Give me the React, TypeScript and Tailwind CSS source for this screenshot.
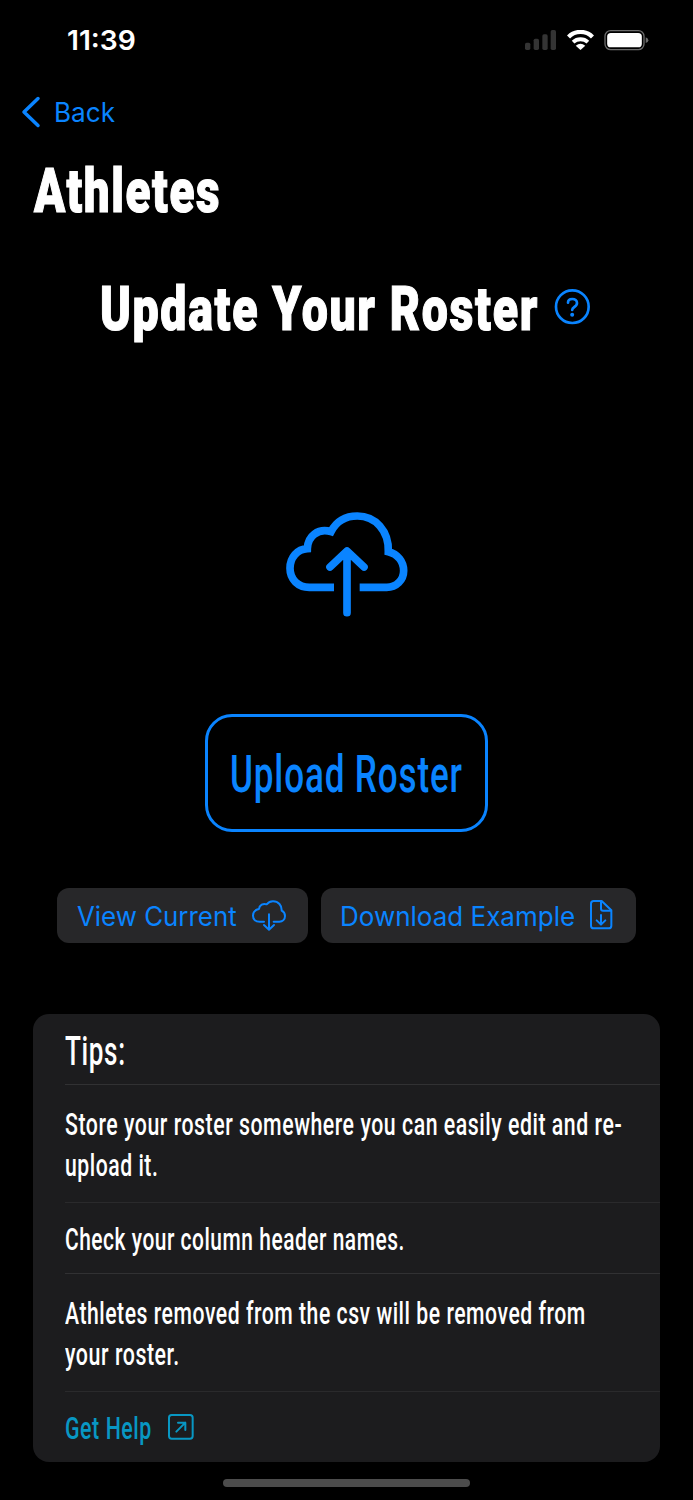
import React, { useLayoutEffect, useRef, useState } from "react";

type FitTextProps = {
  children: string;
  width: number;
  className: string;
};

// Condenses a single line of text so it fills the given width
const FitText = ({ children, width, className }: FitTextProps) => {
  const ref = useRef<HTMLSpanElement>(null);
  const [scale, setScale] = useState(1);

  useLayoutEffect(() => {
    if (ref.current) setScale(width / ref.current.offsetWidth);
  }, [width, children]);

  return (
    <span className="block" style={{ width }}>
      <span
        ref={ref}
        className={`block w-max origin-left whitespace-nowrap ${className}`}
        style={{ transform: `scaleX(${scale})` }}
      >
        {children}
      </span>
    </span>
  );
};

const inter = "font-['Inter',sans-serif] text-[27px] leading-8";
const titleText =
  "font-['Roboto',sans-serif] text-[62px] leading-[80px] font-black tracking-[0.035em] [-webkit-text-stroke:1.2px_#fff]";
const tipText = "font-['Roboto',sans-serif] text-[30.5px] leading-[41px] font-medium tracking-[0.025em]";

const StatusBar = () => (
  <div className="flex h-20 shrink-0 items-center justify-between pr-[44px] pl-[67px]">
    <FitText width={69} className={`${inter} pt-px font-semibold`}>
      11:39
    </FitText>
    <div className="flex items-center">
      {/* signal */}
      <svg className="mr-[11px] h-5 w-[31px]" viewBox="0 0 93 60" fill="#343434">
        <rect x="0" y="38" width="16" height="22" rx="5" />
        <rect x="26" y="26" width="16" height="34" rx="5" />
        <rect x="52" y="13" width="16" height="47" rx="5" />
        <rect x="77" y="0" width="16" height="60" rx="5" />
      </svg>
      {/* wifi */}
      <svg className="mr-[10px] h-5 w-[27px]" viewBox="0 0 81 61" fill="none" stroke="#fff" strokeWidth="13">
        <path d="M4 21A51.5 51.5 0 0 1 77 21" />
        <path d="M18 37A33 33 0 0 1 63 37" strokeWidth="12" />
        <path d="M26 48Q40.5 36 55 48L40.5 61Z" fill="#fff" stroke="none" />
      </svg>
      {/* battery */}
      <svg className="h-[21px] w-[45px]" viewBox="0 0 135 63" fill="none">
        <rect x="3" y="2" width="117" height="57" rx="17" stroke="#6b6b6b" strokeWidth="4" />
        <rect x="9.500" y="9" width="104" height="43" rx="11" fill="#fff" />
        <path d="M125 22Q133 25 133 30.500T125 39Z" fill="#6b6b6b" />
      </svg>
    </div>
  </div>
);

const HelpIcon = () => (
  <svg className="-mt-[5px] ml-[17px] h-9 w-9" viewBox="0 0 108 108" fill="none" stroke="#0a84ff">
    <circle cx="55" cy="53" r="49" strokeWidth="8" />
    <path
      d="M42 41C42 34 47 30 55 30C63 30 69 35 69 42C69 48 66 51 61 54C56 57 54.500 59 54.500 63"
      strokeWidth="8"
      strokeLinecap="round"
    />
    <circle cx="54.500" cy="77" r="6" fill="#0a84ff" stroke="none" />
  </svg>
);

const UploadCloud = () => (
  <svg className="h-[130px] w-[160px]" viewBox="0 0 480 390" fill="none" stroke="#0a84ff" strokeWidth="23">
    <path d="M192 262H118C84 262 60 238 60 205C60 172 82 148 112 146C113 108 144 84 183 95C199 64 228 48 262 48C316 48 357 92 355 155C383 162 401 184 401 212C401 240 379 262 350 262H269" />
    <path d="M231 155V338M180 201L231 153L282 201" strokeLinecap="round" strokeLinejoin="round" />
  </svg>
);

const DownloadCloud = () => (
  <svg className="-mt-px h-[34px] w-[38px]" viewBox="0 0 114 102" fill="none" stroke="#0a84ff" strokeWidth="6" strokeLinecap="round" strokeLinejoin="round">
    <path d="M42 71H29C16 71 9 63 9 53C9 43 16 35 27 33C28 21 40 15 50 19C56 12 62 10 69 10C85 10 96 22 95 38C101 41 105 47 105 54C105 64 98 71 88 71H71" />
    <path d="M57 49V94M42 81L57 95L72 81" />
  </svg>
);

const DownloadFile = () => (
  <svg className="-mt-px h-[34px] w-[27px]" viewBox="0 0 81 102" fill="none" stroke="#0a84ff" strokeWidth="6" strokeLinecap="round" strokeLinejoin="round">
    <path d="M17 9H41L70 37V83Q70 91 62 91H17Q9 91 9 83V17Q9 9 17 9Z" />
    <path d="M39 10V32Q39 38 45 38H69M39 51V79M26 67L39 80L52 67" />
  </svg>
);

const App = () => {
  return (
    <div className="flex h-[1500px] w-[693px] flex-col overflow-hidden bg-black text-white">
      <StatusBar />

      {/* back nav */}
      <div className="flex h-16 shrink-0 items-center pl-[21px] text-[#0a84ff]">
        <svg className="mr-[13px] h-8 w-5" viewBox="0 0 20 32" fill="none" stroke="currentColor" strokeWidth="3.500" strokeLinecap="round" strokeLinejoin="round">
          <path d="M17 2.500L3 16L17 29.500" />
        </svg>
        <FitText width={61} className={`${inter} pt-0.5`}>
          Back
        </FitText>
      </div>

      <h1 className="flex h-[93px] shrink-0 items-center pt-px pl-[34px]">
        <FitText width={187} className={titleText}>
          Athletes
        </FitText>
      </h1>

      <div className="flex h-36 shrink-0 items-center pl-[100px]">
        <h2 className="w-[437px]">
          <FitText width={439} className={titleText}>
            Update Your Roster
          </FitText>
        </h2>
        <HelpIcon />
      </div>

      <div className="flex h-[333px] shrink-0 justify-center pt-[119px] pl-[7px]">
        <UploadCloud />
      </div>

      <button className="ml-[205px] flex h-[118px] w-[283px] shrink-0 items-center justify-center rounded-[27px] border-[3px] border-[#0a84ff] pt-[3px] text-[#0a84ff]">
        <FitText width={233} className="font-['Roboto',sans-serif] text-[52px] leading-[64px] font-medium tracking-[0.025em]">
          Upload Roster
        </FitText>
      </button>

      <div className="mt-14 ml-[57px] flex shrink-0 gap-[13px] text-[#0a84ff]">
        <button className="flex h-[55px] w-[251px] items-center gap-[13px] rounded-xl bg-[#272729] pl-5">
          <FitText width={160} className={`${inter} pt-0.5`}>
            View Current
          </FitText>
          <DownloadCloud />
        </button>
        <button className="flex h-[55px] w-[315px] items-center gap-[13px] rounded-xl bg-[#272729] pl-[19px]">
          <FitText width={235} className={`${inter} pt-0.5`}>
            Download Example
          </FitText>
          <DownloadFile />
        </button>
      </div>

      {/* tips card */}
      <div className="mt-[71px] ml-[33px] flex h-[448px] w-[627px] shrink-0 flex-col rounded-2xl bg-[#1c1c1e] pl-8">
        <div className="flex h-[71px] items-center border-b border-[#313133] pt-1">
          <FitText width={61} className="font-['Roboto',sans-serif] text-[41px] leading-[50px] font-medium tracking-[0.025em]">
            Tips:
          </FitText>
        </div>
        <div className="flex h-[118px] flex-col justify-center border-b border-[#2a2a2c] pt-0.5">
          <FitText width={557} className={tipText}>
            Store your roster somewhere you can easily edit and re-
          </FitText>
          <FitText width={93} className={tipText}>
            upload it.
          </FitText>
        </div>
        <div className="flex h-[71px] items-center border-b border-[#313133] pt-0.5">
          <FitText width={340} className={tipText}>
            Check your column header names.
          </FitText>
        </div>
        <div className="flex h-[118px] flex-col justify-center border-b border-[#2a2a2c] pt-0.5">
          <FitText width={521} className={tipText}>
            Athletes removed from the csv will be removed from
          </FitText>
          <FitText width={115} className={tipText}>
            your roster.
          </FitText>
        </div>
        <div className="flex h-[70px] items-center gap-4 pt-0.5 text-[#0897c3]">
          <FitText width={87} className="font-['Roboto',sans-serif] text-[31px] leading-[41px] font-medium tracking-[0.025em]">
            Get Help
          </FitText>
          <svg className="-mt-[3px] h-[26px] w-[26px]" viewBox="0 0 78 78" fill="none" stroke="currentColor" strokeWidth="6" strokeLinecap="round" strokeLinejoin="round">
            <rect x="3" y="3" width="71" height="71" rx="8" />
            <path d="M25 53L52 26M30 26H52V48" />
          </svg>
        </div>
      </div>

      {/* home indicator */}
      <div className="mt-[17px] ml-[223px] h-2 w-[247px] shrink-0 rounded-full bg-[#4c4c4c]" />
    </div>
  );
};

export default App;
